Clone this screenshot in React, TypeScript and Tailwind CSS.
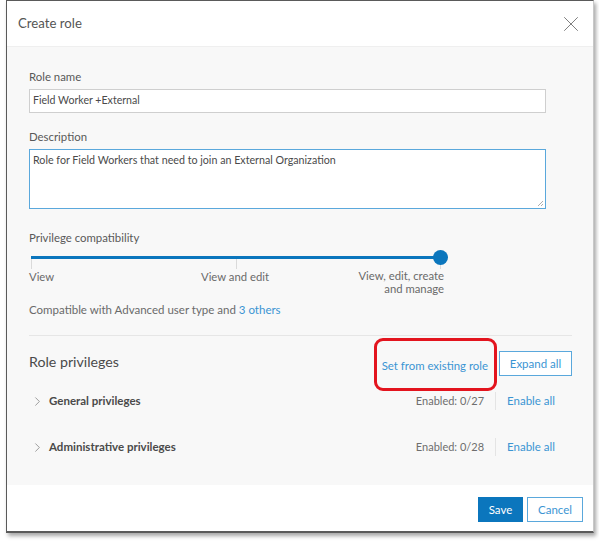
import { ChevronRight, X } from "lucide-react";

const font = { fontFamily: "Lato, 'Open Sans', sans-serif" };

function PrivilegeRow({ title, enabled }: { title: string; enabled: string }) {
  return (
    <div className="flex items-center h-[20px]">
      <ChevronRight className="w-[15px] h-[15px] ml-[1px] text-[#666]" strokeWidth={1} />
      <span className="ml-[4px] text-[11.5px] font-bold text-[#4a4a4a]">{title}</span>
      <span className="ml-auto text-[11px] text-[#6e6e6e]">{enabled}</span>
      <span className="mx-[11px] w-px h-[18px] bg-[#e4e4e4]" />
      <a className="text-[11.5px] text-[#3b95d3] mr-[17px]">Enable all</a>
    </div>
  );
}

export default function App() {
  return (
    <div className="w-[599px] h-[544px] bg-white overflow-hidden" style={font}>
      <div className="ml-[6px] w-[588px] h-[533px] flex flex-col bg-white border-l border-t border-b-2 border-[#5a5a5a] border-r border-r-[#c8c8c8] shadow-[2px_3px_4px_rgba(0,0,0,0.35)]">
        {/* header */}
        <div className="h-[46px] shrink-0 flex items-center justify-between pl-[11px] pr-[9px] border-b border-[#efefef]">
          <span className="text-[13.2px] text-[#555]">Create role</span>
          <X className="w-[26px] h-[26px] text-[#6b6b6b]" strokeWidth={0.8} />
        </div>

        {/* body */}
        <div className="h-[438px] shrink-0 bg-[#f8f8f8] pl-[22px] pr-[21px] pt-[22px]">
          <label className="block text-[11.4px] leading-[16px] text-[#595959]">Role name</label>
          <div className="mt-[4px] w-[517px] h-[24px] bg-white border border-[#cfcfcf] flex items-center px-[3px] text-[10.6px] text-[#4a4a4a]">
            Field Worker +External
          </div>

          <label className="block mt-[16px] text-[11.4px] leading-[16px] text-[#595959]">Description</label>
          <div className="relative mt-[4px] w-[517px] h-[60px] bg-white border-[1.5px] border-[#5aa8dc] px-[3px] pt-[2px] text-[10.7px] leading-[16px] text-[#4a4a4a]">
            Role for Field Workers that need to join an External Organization
            <svg className="absolute right-[1px] bottom-[1px]" width="7" height="7" viewBox="0 0 7 7">
              <path d="M1 6 L6 1 M4 6 L6 4" stroke="#999" strokeWidth="0.8" />
            </svg>
          </div>

          <label className="block mt-[21px] text-[11.4px] leading-[16px] text-[#595959]">Privilege compatibility</label>
          <div className="relative mt-[10px] ml-[2px] w-[410px] h-[12px]">
            <div className="h-[3px] bg-[#0b76bd]" />
            <div className="absolute left-0 top-[3px] w-px h-[10px] bg-[#dadada]" />
            <div className="absolute left-[205px] top-[3px] w-px h-[10px] bg-[#dadada]" />
            <div className="absolute left-[409px] top-[3px] w-px h-[10px] bg-[#dadada]" />
            <div className="absolute left-[402px] top-[-6px] w-[15px] h-[15px] rounded-full bg-[#0b76bd]" />
          </div>
          <div className="w-[415px] flex items-start text-[11.3px] leading-[13px] text-[#6a6a6a]">
            <span className="w-[172px] mt-[2px]">View</span>
            <span className="mt-[2px]">View and edit</span>
            <span className="ml-auto text-right mt-[1px]">
              View, edit, create
              <br />
              and manage
            </span>
          </div>

          <p className="mt-[7px] text-[11.5px] leading-[16px] text-[#6a6a6a]">
            Compatible with Advanced user type and <a className="text-[#3b95d3]">3 others</a>
          </p>

          <div className="mt-[17px] h-px bg-[#e6e6e6]" />

          <div className="mt-[12px] flex items-center justify-between">
            <span className="text-[14.2px] text-[#4a4a4a]">Role privileges</span>
            <div className="flex items-center mt-[3px]">
              <div className="relative h-[16px] leading-[16px]">
                <a className="text-[11.4px] text-[#3b95d3]">Set from existing role</a>
                <div className="absolute left-[-8px] right-[-9px] top-[-18px] bottom-[-19px] border-[3px] border-[#e3141e] rounded-[9px]" />
              </div>
              <button className="ml-[11px] h-[25px] w-[73px] bg-white border border-[#5aa8dc] text-[11.5px] text-[#3b95d3]">
                Expand all
              </button>
            </div>
          </div>

          <div className="mt-[15px]">
            <PrivilegeRow title="General privileges" enabled="Enabled: 0/27" />
          </div>
          <div className="mt-[26px]">
            <PrivilegeRow title="Administrative privileges" enabled="Enabled: 0/28" />
          </div>
        </div>

        {/* footer */}
        <div className="flex-1 flex items-start justify-end pt-[12px] pr-[10px] gap-[4px]">
          <button className="h-[25px] w-[45px] bg-[#0b76bd] text-white text-[11.5px]">Save</button>
          <button className="h-[25px] w-[56px] bg-white border border-[#5aa8dc] text-[#3b95d3] text-[11.5px]">Cancel</button>
        </div>
      </div>
    </div>
  );
}
